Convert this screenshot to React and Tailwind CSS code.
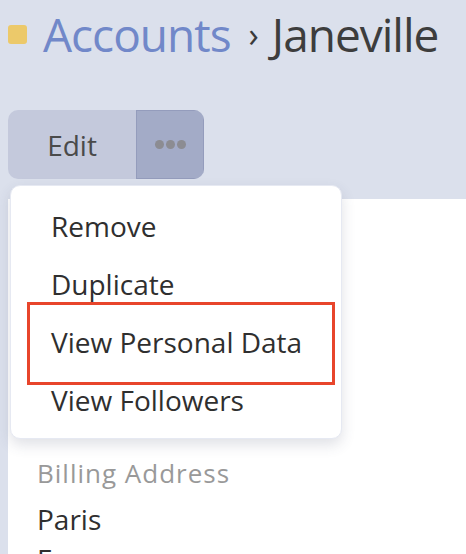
import { useState } from "react";

const menuItems = ["Remove", "Duplicate", "View Personal Data", "View Followers"];

function ActionMenu() {
  return (
    <div className="absolute left-[2px] top-[75px] z-10 w-[332px] rounded-[10px] border border-[#e6e9f2] bg-white pt-[11px] pb-[9px] shadow-[0_6px_14px_rgba(60,70,100,0.16)]">
      {menuItems.map((item) => (
        <div key={item} className="pl-[40px] text-[28px] leading-[58px] text-[#2f2f2f]">
          {item}
        </div>
      ))}
      {/* highlight around the personal data entry */}
      <div className="pointer-events-none absolute left-[16px] top-[116px] h-[83px] w-[308px] border-[3px] border-[#e8452b]" />
    </div>
  );
}

export default function App() {
  const [open] = useState(true);

  return (
    <div className="min-h-[554px] overflow-hidden bg-[#dbe0ec] font-['Open_Sans',sans-serif]">
      <div className="flex items-center pl-[8px] pt-[6px] leading-[56px] tracking-[-1px]">
        <span className="mr-[16px] h-[19px] w-[19px] rounded-[3px] bg-[#ecc96a]" />
        <span className="text-[46px] text-[#7188c9]">Accounts</span>
        <span className="ml-[18px] mr-[14px] text-[34px] text-[#3a3a3a]">›</span>
        <span className="text-[46px] text-[#3d3d3d]">Janeville</span>
      </div>

      <div className="relative ml-[8px] mt-[48px] flex">
        <div className="flex h-[69px] overflow-hidden rounded-[10px]">
          <button className="w-[128px] bg-[#c4c9dc] text-[28px] text-[#4a4a4a]">Edit</button>
          <button className="flex w-[68px] items-center justify-center gap-[2px] bg-[#a3abc7] shadow-[inset_0_0_0_1px_rgba(120,130,170,0.35)]">
            <span className="h-[9px] w-[9px] rounded-full bg-[#8c8c92]" />
            <span className="h-[9px] w-[9px] rounded-full bg-[#8c8c92]" />
            <span className="h-[9px] w-[9px] rounded-full bg-[#8c8c92]" />
          </button>
        </div>
        {open && <ActionMenu />}
      </div>

      <div className="ml-[8px] mt-[20px] bg-white pl-[29px] pt-[256px]">
        <div className="text-[26px] leading-[36px] tracking-[1px] text-[#999999]">Billing Address</div>
        <div className="mt-[8px] text-[28px] leading-[40px] text-[#2f2f2f]">Paris</div>
        <div className="text-[28px] leading-[40px] text-[#2f2f2f]">France</div>
      </div>
    </div>
  );
}
